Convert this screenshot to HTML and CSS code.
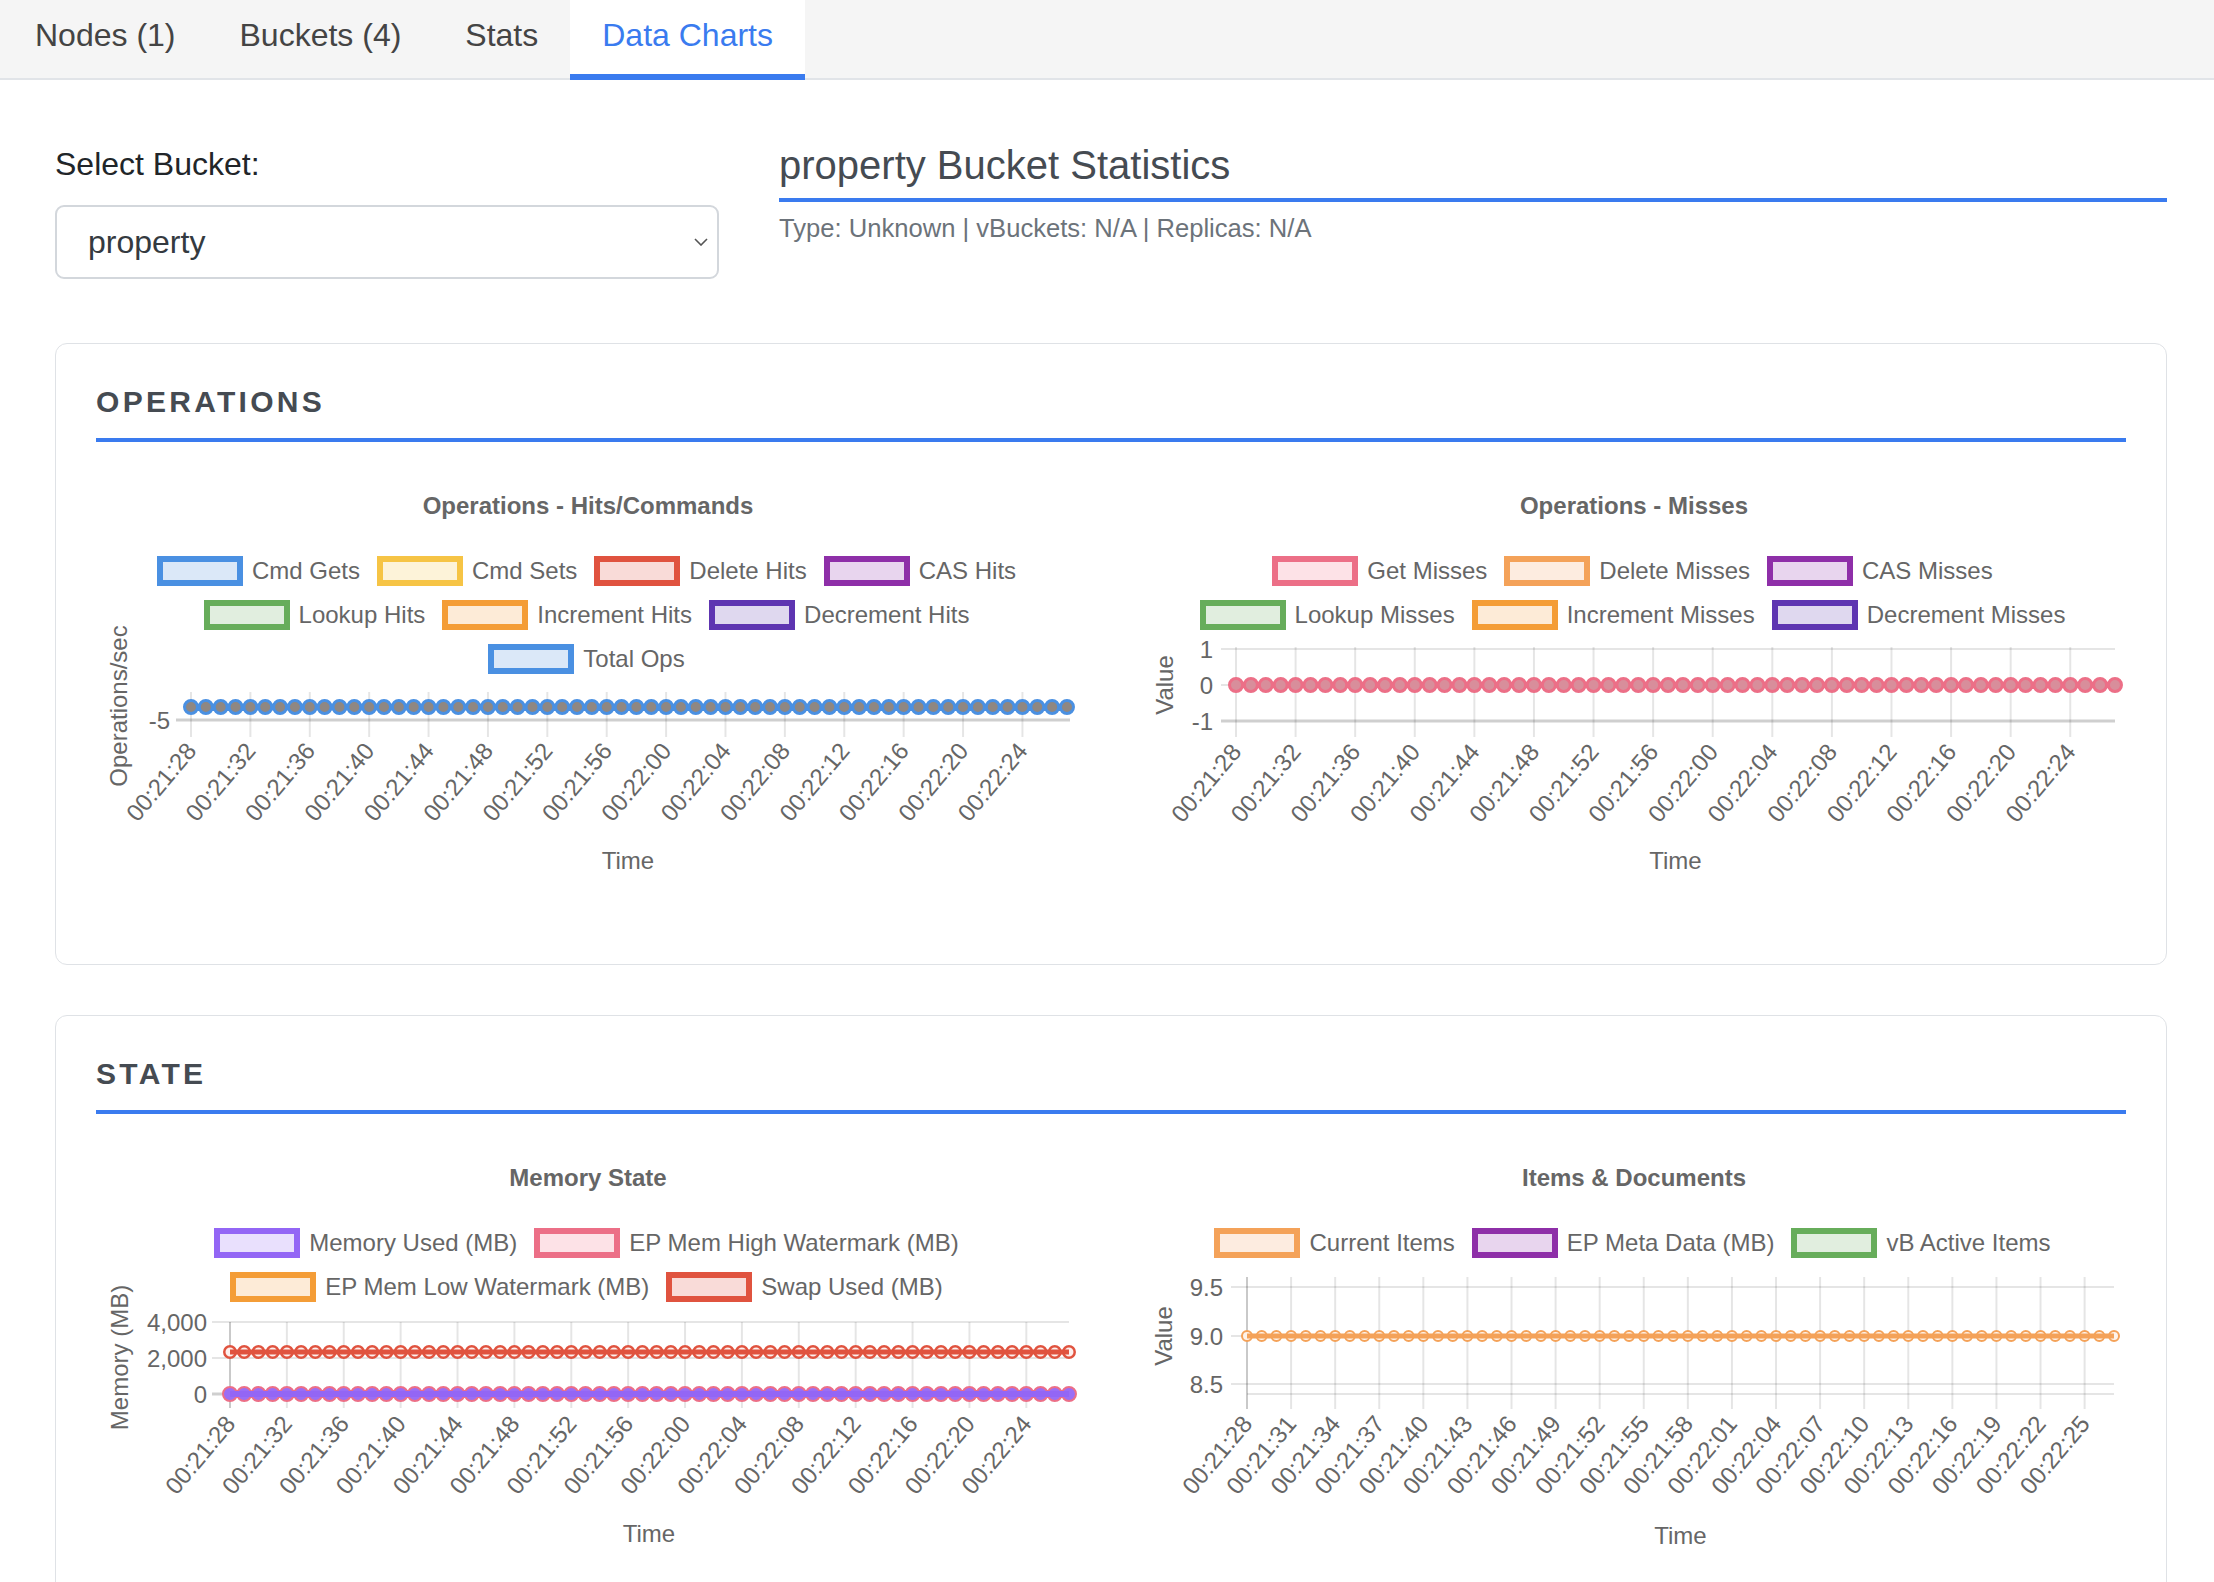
FILE: index.html
```html
<!DOCTYPE html>
<html lang="en">
<head>
<meta charset="utf-8">
<title>Data Charts</title>
<link rel="stylesheet" href="styles.css">
</head>
<body>
<nav class="tabs">
  <div class="tab">Nodes (1)</div>
  <div class="tab">Buckets (4)</div>
  <div class="tab">Stats</div>
  <div class="tab active">Data Charts</div>
</nav>
<main class="page">
  <section class="top">
    <div class="picker">
      <label class="picker-label">Select Bucket:</label>
      <div class="select">
        <span>property</span>
        <svg class="chev" width="14" height="8" viewBox="0 0 14 8"><polyline points="1,1 7,7 13,1"/></svg>
      </div>
    </div>
    <div class="bucket-info">
      <h2 class="bucket-title">property Bucket Statistics</h2>
      <p class="bucket-meta">Type: Unknown | vBuckets: N/A | Replicas: N/A</p>
    </div>
  </section>

  <section class="card">
    <h3 class="card-title">OPERATIONS</h3>
    <div class="charts">
      <div class="chart">
        <div class="chart-title">Operations - Hits/Commands</div>
        <div class="legend">
          <div class="legend-row">
            <div class="legend-item"><span class="lbox c-blue"></span>Cmd Gets</div>
            <div class="legend-item"><span class="lbox c-yellow"></span>Cmd Sets</div>
            <div class="legend-item"><span class="lbox c-red"></span>Delete Hits</div>
            <div class="legend-item"><span class="lbox c-purple"></span>CAS Hits</div>
          </div>
          <div class="legend-row">
            <div class="legend-item"><span class="lbox c-green"></span>Lookup Hits</div>
            <div class="legend-item"><span class="lbox c-orange"></span>Increment Hits</div>
            <div class="legend-item"><span class="lbox c-indigo"></span>Decrement Hits</div>
          </div>
          <div class="legend-row">
            <div class="legend-item"><span class="lbox c-blue"></span>Total Ops</div>
          </div>
        </div>
        <svg class="plot" width="984" height="243" viewBox="0 0 984 243">
          <line class="vgrid" x1="94" y1="33.5" x2="930" y2="33.5" stroke-width="45" stroke-dasharray="2 57.388"/>
          <line class="xaxis" x1="80" y1="39" x2="974" y2="39"/>
          <text class="tick end" x="74" y="39">-5</text>
          <line class="s-blue-line" x1="95" y1="26" x2="971" y2="26"/>
          <line class="dot s-blue-ring" x1="95" y1="26" x2="971.6" y2="26" stroke-width="16" stroke-dasharray="0 14.847"/>
          <line class="dot s-gray-fill" x1="95" y1="26" x2="971.6" y2="26" stroke-width="10" stroke-dasharray="0 14.847"/>
          <text class="tick mid" transform="translate(22 25) rotate(-90)">Operations/sec</text>
          <g class="xlabels">
            <text transform="translate(95 65) rotate(-50)">00:21:28</text>
            <text transform="translate(154.39 65) rotate(-50)">00:21:32</text>
            <text transform="translate(213.78 65) rotate(-50)">00:21:36</text>
            <text transform="translate(273.16 65) rotate(-50)">00:21:40</text>
            <text transform="translate(332.55 65) rotate(-50)">00:21:44</text>
            <text transform="translate(391.94 65) rotate(-50)">00:21:48</text>
            <text transform="translate(451.33 65) rotate(-50)">00:21:52</text>
            <text transform="translate(510.72 65) rotate(-50)">00:21:56</text>
            <text transform="translate(570.1 65) rotate(-50)">00:22:00</text>
            <text transform="translate(629.49 65) rotate(-50)">00:22:04</text>
            <text transform="translate(688.88 65) rotate(-50)">00:22:08</text>
            <text transform="translate(748.27 65) rotate(-50)">00:22:12</text>
            <text transform="translate(807.66 65) rotate(-50)">00:22:16</text>
            <text transform="translate(867.04 65) rotate(-50)">00:22:20</text>
            <text transform="translate(926.43 65) rotate(-50)">00:22:24</text>
          </g>
          <text class="tick mid" x="532" y="179">Time</text>
        </svg>
      </div>

      <div class="chart">
        <div class="chart-title">Operations - Misses</div>
        <div class="legend">
          <div class="legend-row">
            <div class="legend-item"><span class="lbox c-pink"></span>Get Misses</div>
            <div class="legend-item"><span class="lbox c-peach"></span>Delete Misses</div>
            <div class="legend-item"><span class="lbox c-purple"></span>CAS Misses</div>
          </div>
          <div class="legend-row">
            <div class="legend-item"><span class="lbox c-green"></span>Lookup Misses</div>
            <div class="legend-item"><span class="lbox c-orange"></span>Increment Misses</div>
            <div class="legend-item"><span class="lbox c-indigo"></span>Decrement Misses</div>
          </div>
        </div>
        <svg class="plot" width="984" height="287" viewBox="0 0 984 287">
          <line class="hgrid" x1="79" y1="12" x2="973" y2="12"/>
          <line class="hgrid" x1="79" y1="48" x2="973" y2="48"/>
          <line class="xaxis" x1="79" y1="84" x2="973" y2="84"/>
          <line class="vgrid" x1="93" y1="55" x2="975" y2="55" stroke-width="90" stroke-dasharray="2 57.59"/>
          <text class="tick end" x="71" y="12">1</text>
          <text class="tick end" x="71" y="48">0</text>
          <text class="tick end" x="71" y="84">-1</text>
          <line class="s-pink-line" x1="94" y1="48" x2="973" y2="48"/>
          <line class="dot s-pink-ring" x1="94" y1="48" x2="973.6" y2="48" stroke-width="16" stroke-dasharray="0 14.898"/>
          <line class="dot s-pink-fill" x1="94" y1="48" x2="973.6" y2="48" stroke-width="10" stroke-dasharray="0 14.898"/>
          <text class="tick mid" transform="translate(22 48) rotate(-90)">Value</text>
          <g class="xlabels">
            <text transform="translate(94 110) rotate(-50)">00:21:28</text>
            <text transform="translate(153.59 110) rotate(-50)">00:21:32</text>
            <text transform="translate(213.19 110) rotate(-50)">00:21:36</text>
            <text transform="translate(272.78 110) rotate(-50)">00:21:40</text>
            <text transform="translate(332.37 110) rotate(-50)">00:21:44</text>
            <text transform="translate(391.97 110) rotate(-50)">00:21:48</text>
            <text transform="translate(451.56 110) rotate(-50)">00:21:52</text>
            <text transform="translate(511.15 110) rotate(-50)">00:21:56</text>
            <text transform="translate(570.75 110) rotate(-50)">00:22:00</text>
            <text transform="translate(630.34 110) rotate(-50)">00:22:04</text>
            <text transform="translate(689.93 110) rotate(-50)">00:22:08</text>
            <text transform="translate(749.53 110) rotate(-50)">00:22:12</text>
            <text transform="translate(809.12 110) rotate(-50)">00:22:16</text>
            <text transform="translate(868.71 110) rotate(-50)">00:22:20</text>
            <text transform="translate(928.31 110) rotate(-50)">00:22:24</text>
          </g>
          <text class="tick mid" x="533.5" y="223">Time</text>
        </svg>
      </div>
    </div>
  </section>

  <section class="card card-next">
    <h3 class="card-title">STATE</h3>
    <div class="charts">
      <div class="chart">
        <div class="chart-title">Memory State</div>
        <div class="legend">
          <div class="legend-row">
            <div class="legend-item"><span class="lbox c-violet"></span>Memory Used (MB)</div>
            <div class="legend-item"><span class="lbox c-pink"></span>EP Mem High Watermark (MB)</div>
          </div>
          <div class="legend-row">
            <div class="legend-item"><span class="lbox c-orange"></span>EP Mem Low Watermark (MB)</div>
            <div class="legend-item"><span class="lbox c-red"></span>Swap Used (MB)</div>
          </div>
        </div>
        <svg class="plot" width="984" height="256" viewBox="0 0 984 256">
          <line class="hgrid" x1="116" y1="13" x2="973" y2="13"/>
          <line class="hgrid" x1="116" y1="49" x2="973" y2="49"/>
          <line class="xaxis" x1="116" y1="85" x2="973" y2="85"/>
          <line class="vgrid" x1="133" y1="56" x2="975" y2="56" stroke-width="86" stroke-dasharray="2 54.88"/>
          <line class="yaxis" x1="134" y1="13" x2="134" y2="99"/>
          <text class="tick end" x="111" y="13">4,000</text>
          <text class="tick end" x="111" y="49">2,000</text>
          <text class="tick end" x="111" y="85">0</text>
          <line class="dot s-red-ring" x1="134" y1="43" x2="973.6" y2="43" stroke-width="14" stroke-dasharray="0 14.22"/>
          <line class="dot s-red-fill" x1="134" y1="43" x2="973.6" y2="43" stroke-width="9" stroke-dasharray="0 14.22"/>
          <line class="s-red-line" x1="134" y1="43" x2="973" y2="43"/>
          <line class="dot s-pink-ring" x1="134" y1="85" x2="973.6" y2="85" stroke-width="16" stroke-dasharray="0 14.22"/>
          <line class="dot s-violet-fill" x1="134" y1="85" x2="973.6" y2="85" stroke-width="12" stroke-dasharray="0 14.22"/>
          <line class="s-violet-line" x1="134" y1="85" x2="973" y2="85"/>
          <text class="tick mid" transform="translate(23 48.5) rotate(-90)">Memory (MB)</text>
          <g class="xlabels">
            <text transform="translate(134 110) rotate(-50)">00:21:28</text>
            <text transform="translate(190.88 110) rotate(-50)">00:21:32</text>
            <text transform="translate(247.76 110) rotate(-50)">00:21:36</text>
            <text transform="translate(304.64 110) rotate(-50)">00:21:40</text>
            <text transform="translate(361.53 110) rotate(-50)">00:21:44</text>
            <text transform="translate(418.41 110) rotate(-50)">00:21:48</text>
            <text transform="translate(475.29 110) rotate(-50)">00:21:52</text>
            <text transform="translate(532.17 110) rotate(-50)">00:21:56</text>
            <text transform="translate(589.05 110) rotate(-50)">00:22:00</text>
            <text transform="translate(645.93 110) rotate(-50)">00:22:04</text>
            <text transform="translate(702.81 110) rotate(-50)">00:22:08</text>
            <text transform="translate(759.69 110) rotate(-50)">00:22:12</text>
            <text transform="translate(816.58 110) rotate(-50)">00:22:16</text>
            <text transform="translate(873.46 110) rotate(-50)">00:22:20</text>
            <text transform="translate(930.34 110) rotate(-50)">00:22:24</text>
          </g>
          <text class="tick mid" x="553" y="224">Time</text>
        </svg>
      </div>

      <div class="chart">
        <div class="chart-title">Items &amp; Documents</div>
        <div class="legend">
          <div class="legend-row">
            <div class="legend-item"><span class="lbox c-peach"></span>Current Items</div>
            <div class="legend-item"><span class="lbox c-purple"></span>EP Meta Data (MB)</div>
            <div class="legend-item"><span class="lbox c-green"></span>vB Active Items</div>
          </div>
        </div>
        <svg class="plot" width="984" height="300" viewBox="0 0 984 300">
          <line class="hgrid" x1="89" y1="22" x2="972" y2="22"/>
          <line class="hgrid" x1="89" y1="71" x2="972" y2="71"/>
          <line class="hgrid" x1="89" y1="119" x2="972" y2="119"/>
          <line class="hgrid" x1="105" y1="129" x2="972" y2="129"/>
          <line class="vgrid" x1="104" y1="78" x2="975" y2="78" stroke-width="132" stroke-dasharray="2 42.085"/>
          <line class="yaxis" x1="105" y1="12" x2="105" y2="144"/>
          <text class="tick end" x="81" y="22">9.5</text>
          <text class="tick end" x="81" y="71">9.0</text>
          <text class="tick end" x="81" y="119">8.5</text>
          <line class="dot s-peach-ring" x1="105" y1="71" x2="972.6" y2="71" stroke-width="12" stroke-dasharray="0 14.695"/>
          <line class="dot s-peach-fill" x1="105" y1="71" x2="972.6" y2="71" stroke-width="8" stroke-dasharray="0 14.695"/>
          <line class="s-peach-line" x1="105" y1="71" x2="972" y2="71"/>
          <text class="tick mid" transform="translate(21 71) rotate(-90)">Value</text>
          <g class="xlabels">
            <text transform="translate(105 154) rotate(-50)">00:21:28</text>
            <text transform="translate(149.08 154) rotate(-50)">00:21:31</text>
            <text transform="translate(193.17 154) rotate(-50)">00:21:34</text>
            <text transform="translate(237.25 154) rotate(-50)">00:21:37</text>
            <text transform="translate(281.34 154) rotate(-50)">00:21:40</text>
            <text transform="translate(325.42 154) rotate(-50)">00:21:43</text>
            <text transform="translate(369.51 154) rotate(-50)">00:21:46</text>
            <text transform="translate(413.59 154) rotate(-50)">00:21:49</text>
            <text transform="translate(457.68 154) rotate(-50)">00:21:52</text>
            <text transform="translate(501.76 154) rotate(-50)">00:21:55</text>
            <text transform="translate(545.85 154) rotate(-50)">00:21:58</text>
            <text transform="translate(589.93 154) rotate(-50)">00:22:01</text>
            <text transform="translate(634.02 154) rotate(-50)">00:22:04</text>
            <text transform="translate(678.1 154) rotate(-50)">00:22:07</text>
            <text transform="translate(722.19 154) rotate(-50)">00:22:10</text>
            <text transform="translate(766.27 154) rotate(-50)">00:22:13</text>
            <text transform="translate(810.36 154) rotate(-50)">00:22:16</text>
            <text transform="translate(854.44 154) rotate(-50)">00:22:19</text>
            <text transform="translate(898.53 154) rotate(-50)">00:22:22</text>
            <text transform="translate(942.61 154) rotate(-50)">00:22:25</text>
          </g>
          <text class="tick mid" x="538.5" y="270">Time</text>
        </svg>
      </div>
    </div>
  </section>
</main>
</body>
</html>
```

FILE: styles.css
```css
body {
  margin: 0;
  background: #ffffff;
  font-family: "Liberation Sans", Arial, Helvetica, sans-serif;
  color: #333333;
}

/* ---------- tabs ---------- */
.tabs {
  display: flex;
  background: #f5f5f5;
  border-bottom: 2px solid #e1e4e8;
  padding-left: 3px;
}
.tab {
  height: 80px;
  margin-bottom: -2px;
  box-sizing: border-box;
  padding: 0 32px;
  font-size: 32px;
  line-height: 70px;
  color: #444444;
}
.tab.active {
  background: #ffffff;
  color: #3a7bef;
  border-bottom: 6px solid #3a7bef;
}

/* ---------- page ---------- */
.page {
  padding: 61px 47px 0 55px;
}
.top {
  display: grid;
  grid-template-columns: 664px 1fr;
  column-gap: 60px;
}
.picker {
  padding-top: 4px;
}
.picker-label {
  display: block;
  font-size: 32px;
  line-height: 38px;
  color: #212529;
  margin-bottom: 22px;
}
.select {
  height: 74px;
  box-sizing: border-box;
  border: 2px solid #d3d7dc;
  border-radius: 9px;
  display: flex;
  align-items: center;
  justify-content: space-between;
  padding: 0 9px 0 31px;
  font-size: 32px;
  color: #343a40;
}
.chev polyline {
  fill: none;
  stroke: #555555;
  stroke-width: 1.6;
}
.bucket-title {
  margin: 0;
  font-size: 40px;
  line-height: 48px;
  font-weight: 400;
  color: #454b52;
  padding-bottom: 9px;
  border-bottom: 4px solid #3a7bef;
}
.bucket-meta {
  margin: 11px 0 0;
  font-size: 25.6px;
  line-height: 30px;
  color: #6c737a;
}

/* ---------- cards ---------- */
.card {
  border: 1px solid #dfe2e6;
  border-radius: 12px;
  padding: 40px;
  margin-top: 64px;
}
.card-next {
  margin-top: 50px;
}
.card-title {
  margin: 0;
  font-size: 30px;
  line-height: 36px;
  font-weight: 700;
  letter-spacing: 3.3px;
  color: #454b52;
  padding-bottom: 18px;
  border-bottom: 4px solid #3a7bef;
}
.charts {
  display: grid;
  grid-template-columns: 1fr 1fr;
  column-gap: 62px;
  margin-top: 40px;
  align-items: start;
}
.chart {
  display: flex;
  flex-direction: column;
}
.chart-title {
  font-size: 24px;
  font-weight: 700;
  color: #666666;
  text-align: center;
  line-height: 47px;
}
.legend {
  margin-top: 20px;
}
.legend-row {
  display: flex;
  justify-content: center;
  align-items: center;
  gap: 20px;
  height: 44px;
}
.legend-item {
  display: flex;
  align-items: center;
  font-size: 24px;
  line-height: 1;
  color: #666666;
  white-space: nowrap;
}
.lbox {
  width: 74px;
  height: 18px;
  border: 6px solid;
  margin: 0 9px 0 -3px;
  flex: none;
}
.c-blue   { border-color: #4a90e2; background: #dbe8f8; }
.c-yellow { border-color: #f6c445; background: #fdf3d9; }
.c-red    { border-color: #e0533f; background: #f9dbd8; }
.c-purple { border-color: #8e2fa8; background: #e8d5ee; }
.c-green  { border-color: #67ad5b; background: #e1eedf; }
.c-orange { border-color: #f49d37; background: #fdebd7; }
.c-indigo { border-color: #5e35b1; background: #dfd8ef; }
.c-pink   { border-color: #ec6f87; background: #fde2e7; }
.c-peach  { border-color: #f4a259; background: #fdece0; }
.c-violet { border-color: #9366f5; background: #e9e0fd; }

/* ---------- plots ---------- */
.plot {
  display: block;
  overflow: visible;
}
.plot text {
  font-family: "Liberation Sans", Arial, Helvetica, sans-serif;
  font-size: 24px;
  fill: #666666;
  dominant-baseline: central;
}
.plot .end { text-anchor: end; }
.plot .mid { text-anchor: middle; }
.xlabels text { text-anchor: end; }

.vgrid { stroke: rgba(0, 0, 0, 0.1); }
.hgrid { stroke: rgba(0, 0, 0, 0.1); stroke-width: 2; }
.xaxis { stroke: rgba(0, 0, 0, 0.19); stroke-width: 3; }
.yaxis { stroke: rgba(0, 0, 0, 0.12); stroke-width: 2; }

.dot { stroke-linecap: round; }

.s-blue-line { stroke: #4a90e2; stroke-width: 6; }
.s-blue-ring { stroke: #4a90e2; }
.s-gray-fill { stroke: #8f8782; }

.s-pink-line { stroke: #ec6f87; stroke-width: 6; }
.s-pink-ring { stroke: #ec6f87; }
.s-pink-fill { stroke: #d88e9b; }

.s-red-line { stroke: #e0533f; stroke-width: 5; }
.s-red-ring { stroke: #e0533f; }
.s-red-fill { stroke: #fdf0ee; }

.s-violet-line { stroke: #9366f5; stroke-width: 6; }
.s-violet-fill { stroke: #9a6ef5; }

.s-peach-line { stroke: #f4a259; stroke-width: 5; }
.s-peach-ring { stroke: #f4a259; }
.s-peach-fill { stroke: #fef3ea; }
```
